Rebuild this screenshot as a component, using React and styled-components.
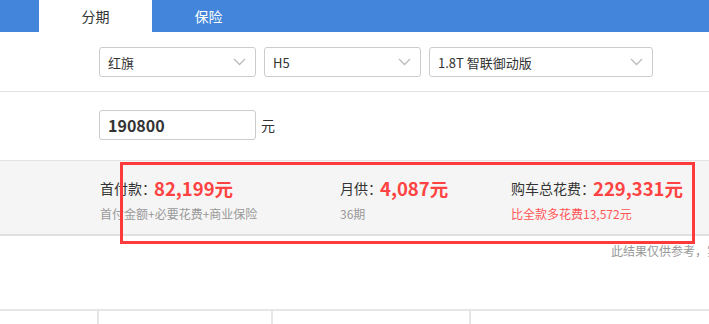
import React from "react";
import styled, { createGlobalStyle } from "styled-components";

const GlobalStyle = createGlobalStyle`
  body {
    margin: 0;
    background: #fff;
    font-family: "Noto Sans CJK SC", "Noto Sans", sans-serif;
    color: #333;
    overflow: hidden;
  }
`;

const Chevron = () => (
  <svg width="13" height="8" viewBox="0 0 13 8" fill="none">
    <path d="M1 1l5.5 5.5L12 1" stroke="#bbb" strokeWidth="1.3" />
  </svg>
);

const App = () => {
  return (
    <Page>
      <GlobalStyle />
      <Tabs>
        <Tab active>分期</Tab>
        <Tab>保险</Tab>
      </Tabs>
      <Section pt={15} pb={14} bordered>
        <Select w={157}>
          <span>红旗</span>
          <Chevron />
        </Select>
        <Select w={157}>
          <span>H5</span>
          <Chevron />
        </Select>
        <Select w={224}>
          <span>1.8T 智联御动版</span>
          <Chevron />
        </Select>
      </Section>
      <Section pt={18} pb={20}>
        <PriceInput>190800</PriceInput>
        <Unit>元</Unit>
      </Section>
      <Summary>
        <Item w={240}>
          <Main>
            首付款：<Value>82,199元</Value>
          </Main>
          <Sub>首付金额+必要花费+商业保险</Sub>
        </Item>
        <Item w={171}>
          <Main>
            月供：<Value>4,087元</Value>
          </Main>
          <Sub>36期</Sub>
        </Item>
        <Item>
          <Main>
            购车总花费：<Value>229,331元</Value>
          </Main>
          <Sub red>比全款多花费13,572元</Sub>
        </Item>
        <Highlight />
      </Summary>
      <Notice>此结果仅供参考，实际应缴费用以当地为准</Notice>
      <Table>
        <Cell w={99} />
        <Cell w={174} />
        <Cell w={198} />
        <Cell />
      </Table>
    </Page>
  );
};

const Page = styled.div`
  width: 709px;
`;

const Tabs = styled.div`
  display: flex;
  height: 32px;
  padding-left: 39px;
  background: #4285da;
`;

const Tab = styled.div`
  width: 113px;
  display: flex;
  align-items: center;
  justify-content: center;
  font-size: 14px;
  background: ${(p) => (p.active ? "#fff" : "transparent")};
  color: ${(p) => (p.active ? "#333" : "#fff")};
`;

const Section = styled.div`
  display: flex;
  align-items: center;
  gap: 8px;
  padding: ${(p) => p.pt}px 0 ${(p) => p.pb}px 99px;
  border-bottom: ${(p) => (p.bordered ? "1px solid #e3e3e3" : "none")};
`;

const Select = styled.div`
  box-sizing: border-box;
  width: ${(p) => p.w}px;
  height: 30px;
  display: flex;
  align-items: center;
  justify-content: space-between;
  padding: 0 9px 0 8px;
  border: 1px solid #ccc;
  border-radius: 3px;
  font-size: 13px;
  color: #333;
`;

const PriceInput = styled.div`
  box-sizing: border-box;
  width: 157px;
  height: 30px;
  display: flex;
  align-items: center;
  padding-left: 8px;
  border: 1px solid #ccc;
  border-radius: 3px;
  font-size: 16px;
  font-weight: bold;
  color: #333;
`;

const Unit = styled.span`
  font-size: 14px;
  margin-left: -3px;
`;

const Summary = styled.div`
  position: relative;
  display: flex;
  padding: 14px 0 11px 100px;
  background: #f5f5f5;
  border-top: 1px solid #e3e3e3;
  border-bottom: 2px solid #e0e0e0;
`;

const Item = styled.div`
  width: ${(p) => (p.w ? `${p.w}px` : "auto")};
  display: flex;
  flex-direction: column;
  gap: 4px;
`;

const Main = styled.div`
  height: 26px;
  display: flex;
  align-items: center;
  font-size: 14px;
  color: #333;
`;

const Value = styled.span`
  margin-left: -2px;
  font-size: 18.5px;
  font-weight: bold;
  color: #ff4242;
`;

const Sub = styled.div`
  font-size: 12px;
  line-height: 18px;
  color: ${(p) => (p.red ? "#ff5656" : "#999")};
`;

const Highlight = styled.div`
  position: absolute;
  left: 120px;
  top: 1px;
  width: 575px;
  height: 82px;
  box-sizing: border-box;
  border: 3px solid #ff3a3a;
`;

const Notice = styled.div`
  margin: 7px 0 0 611px;
  font-size: 12px;
  line-height: 16px;
  color: #999;
  white-space: nowrap;
`;

const Table = styled.div`
  display: flex;
  margin-top: 50px;
  height: 20px;
  border-top: 2px solid #e6e6e6;
`;

const Cell = styled.div`
  box-sizing: border-box;
  width: ${(p) => (p.w ? `${p.w}px` : "auto")};
  flex: ${(p) => (p.w ? "none" : "1")};
  border-right: 2px solid #e6e6e6;
  &:last-child {
    border-right: none;
  }
`;

export default App;
